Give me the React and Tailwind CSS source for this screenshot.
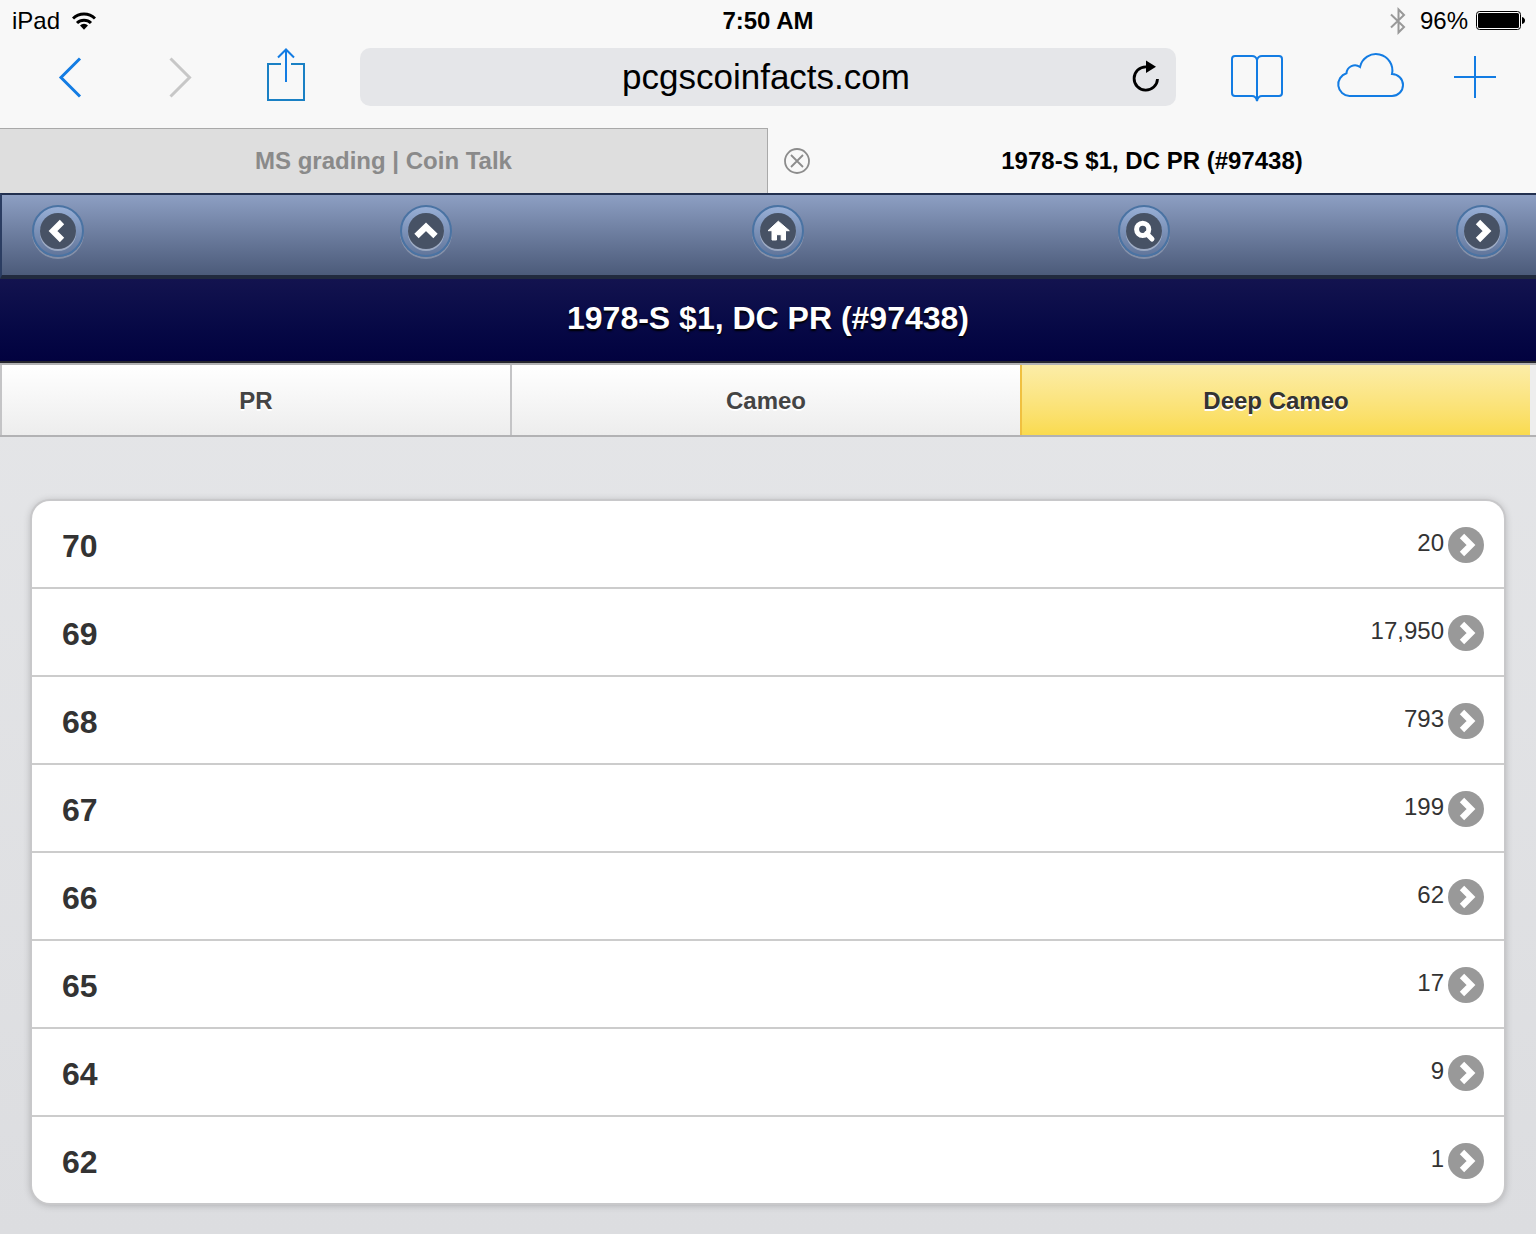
import clsx from "clsx";

const grades = [
  { grade: "70", count: "20" },
  { grade: "69", count: "17,950" },
  { grade: "68", count: "793" },
  { grade: "67", count: "199" },
  { grade: "66", count: "62" },
  { grade: "65", count: "17" },
  { grade: "64", count: "9" },
  { grade: "62", count: "1" },
];

const chevron = "M14 9 L23 18 L14 27";

const StatusBar = () => (
  <div className="grid h-10 grid-cols-3 items-center px-3 pt-[2px] text-2xl text-black">
    <div className="flex items-center gap-3">
      <span>iPad</span>
      <svg width="24" height="18" viewBox="0 0 24 18" fill="none" stroke="#000" strokeWidth="3">
        <path d="M1 6.5 A15.5 15.5 0 0 1 23 6.5" />
        <path d="M5 11 A10 10 0 0 1 19 11" />
        <path d="M8 13.5 A5.7 5.7 0 0 1 16 13.5 L12 17.8 Z" fill="#000" stroke="none" />
      </svg>
    </div>
    <div className="text-center font-bold">7:50 AM</div>
    <div className="flex items-center justify-end">
      <svg className="mr-[14px]" width="16" height="28" viewBox="0 0 16 28" fill="none" stroke="#999" strokeWidth="2">
        <path d="M1 7.5 L14 20 L8.5 25.5 V2.5 L14 8 L1 20.5" />
      </svg>
      <span className="mr-2">96%</span>
      <svg className="-mr-px" width="49" height="20" viewBox="0 0 49 20">
        <rect x="0.5" y="0.5" width="44" height="18" rx="3" fill="#fff" stroke="#000" />
        <rect x="2" y="2" width="41" height="15" rx="1.5" fill="#000" />
        <path d="M46 6 Q49 7 49 9.5 T46 13 Z" fill="#000" />
      </svg>
    </div>
  </div>
);

const Toolbar = () => (
  <div className="flex h-20 items-start pt-2">
    <div className="flex h-[58px] w-[360px] items-center justify-between pr-[54px] pl-[58px]">
      <button type="button" aria-label="Back">
        <svg width="24" height="58" viewBox="0 0 24 58" fill="none" stroke="#137ce3" strokeWidth="3">
          <path d="M22 10.5 L3 29.5 L22 48.5" />
        </svg>
      </button>
      <button type="button" aria-label="Forward">
        <svg width="36" height="58" viewBox="0 0 36 58" fill="none" stroke="#c7c7c7" strokeWidth="3">
          <path d="M14.5 10.5 L33.5 29.5 L14.5 48.5" />
        </svg>
      </button>
      <button type="button" aria-label="Share">
        <svg width="40" height="58" viewBox="0 0 40 58" fill="none" stroke="#1a80c4" strokeWidth="2">
          <path d="M15 16 H2 V52 H38 V16 H25" />
          <path d="M20 34 V2 M12 9.5 L20 1.5 L28 9.5" stroke="#137ce3" />
        </svg>
      </button>
    </div>
    <div className="relative h-[58px] flex-1">
      <input
        type="text"
        aria-label="Address"
        defaultValue="pcgscoinfacts.com"
        className="h-full w-full rounded-[10px] bg-[#e5e6e9] pr-1 text-center text-[35px] text-black outline-none"
      />
      <button type="button" aria-label="Reload" className="absolute inset-y-0 right-4">
        <svg width="28" height="58" viewBox="0 0 28 58" fill="none" stroke="#000" strokeWidth="2.8">
          <path d="M25.5 31 A11.7 11.7 0 1 1 14 18.8" />
          <path d="M14 12.5 L24 18.7 L14 25 Z" fill="#000" stroke="none" />
        </svg>
      </button>
    </div>
    <div className="flex h-[58px] w-[360px] items-center justify-between pr-[39px] pl-[54px] text-[#137ce3]">
      <button type="button" aria-label="Bookmarks">
        <svg width="54" height="58" viewBox="0 0 54 58" fill="none" stroke="currentColor" strokeWidth="2">
          <path d="M27 53 V12 Q26 8 22 8 H5 Q2 8 2 11 V45 Q2 48 5 48 H22 Q26 48 27 53 Q28 48 32 48 H49 Q52 48 52 45 V11 Q52 8 49 8 H32 Q28 8 27 12" />
        </svg>
      </button>
      <button type="button" aria-label="iCloud tabs">
        <svg width="73" height="58" viewBox="0 0 73 58" fill="none" stroke="currentColor" strokeWidth="2">
          <path d="M17.5 48 A11.6 11.6 0 0 1 14.5 25.3 A8.5 8.5 0 0 1 28 19 A16.3 16.3 0 0 1 60 26 A11 11 0 0 1 60 48 Z" />
        </svg>
      </button>
      <button type="button" aria-label="New tab">
        <svg width="44" height="58" viewBox="0 0 44 58" fill="none" stroke="currentColor" strokeWidth="2">
          <path d="M22 8 V50 M1 29 H43" />
        </svg>
      </button>
    </div>
  </div>
);

const BrowserTabs = () => (
  <div className="mt-2 grid h-[65px] grid-cols-2 text-2xl font-bold">
    <button type="button" className="border-t border-r border-[#a9a9a9] bg-[#dedede] text-[#8a8a8a]">
      MS grading | Coin Talk
    </button>
    <div className="relative flex items-center justify-center text-black">
      <button type="button" aria-label="Close tab" className="absolute left-4">
        <svg width="26" height="26" viewBox="0 0 26 26" fill="none" stroke="#8c8c8c" strokeWidth="1.8">
          <circle cx="13" cy="13" r="12" />
          <path d="M7 7 L19 19 M19 7 L7 19" />
        </svg>
      </button>
      <span>1978-S $1, DC PR (#97438)</span>
    </div>
  </div>
);

const NavButton = ({ label, children }) => (
  <a
    href="#"
    aria-label={label}
    className="flex size-[52px] items-center justify-center rounded-full border-2 border-[#4a73a3] bg-linear-to-b from-[#98afd6] to-[#62769b] shadow-[0_2px_0_rgba(255,255,255,0.25)]"
  >
    <svg
      className="size-9 rounded-full bg-[#475265] shadow-[0_2px_0_rgba(255,255,255,0.35)]"
      viewBox="0 0 36 36"
      fill="none"
      stroke="#fff"
      strokeWidth="6.2"
    >
      {children}
    </svg>
  </a>
);

const IconBar = () => (
  <nav className="grid h-[86px] grid-cols-[368fr_352fr_366fr_338fr_52px] items-start border-t-2 border-b-4 border-l-2 border-t-[#22304f] border-b-[#212a3e] border-l-[#2b3d62] bg-linear-to-b from-[#8d9fc3] to-[#4c5b7a] pt-[10px] pr-7 pl-[30px]">
    <NavButton label="Previous">
      <path d="M22 9 L13 18 L22 27" />
    </NavButton>
    <NavButton label="Up">
      <path d="M8.5 23 L18 13.8 L27.5 23" />
    </NavButton>
    <NavButton label="Home">
      <path
        d="M18.3 8.2 L29.3 17.7 H25.5 V27 H21.2 V21.7 H16.5 V27 H12 V17.7 H8 Z"
        fill="#fff"
        strokeWidth="1"
        strokeLinejoin="round"
      />
    </NavButton>
    <NavButton label="Search">
      <circle cx="16.7" cy="16.3" r="6.1" strokeWidth="5" />
      <path d="M20.5 20.5 L26 26" strokeWidth="5" strokeLinecap="round" />
    </NavButton>
    <NavButton label="Next">
      <path d={chevron} />
    </NavButton>
  </nav>
);

const DesignationTabs = () => {
  const tabs = ["PR", "Cameo", "Deep Cameo"];
  return (
    <div className="grid h-[74px] grid-cols-3 border-y-2 border-[#b2b2b4] bg-[#eeeeee] pr-[6px] text-2xl font-bold">
      {tabs.map((tab) => (
        <button
          key={tab}
          type="button"
          className={clsx(
            "border-l-2 bg-linear-to-b pt-[2px] text-shadow-[0_2px_0_#fff]",
            tab === "Deep Cameo"
              ? "border-[#f0c040] from-[#fceda7] to-[#fadb4e] text-[#333]"
              : "border-[#c4c4c6] from-white to-[#ededed] text-[#444]",
          )}
        >
          {tab}
        </button>
      ))}
    </div>
  );
};

const GradeRow = ({ grade, count }) => (
  <li className="border-b-2 border-[#cccccc] last:border-b-0">
    <a href="#" className="flex h-[86px] items-center pt-[2px] pr-5 pl-[30px] text-[#333]">
      <span className="flex-1 pt-[2px] text-[32px] leading-10 font-bold">{grade}</span>
      <span className="mr-1 pb-1 text-2xl">{count}</span>
      <svg
        className="size-9 rounded-full bg-[#999]"
        viewBox="0 0 36 36"
        fill="none"
        stroke="#fff"
        strokeWidth="6.2"
      >
        <path d={chevron} />
      </svg>
    </a>
  </li>
);

export default function App() {
  return (
    <div className="min-h-screen bg-linear-to-b from-[#e8e9eb] to-[#dcdde0] font-['Liberation_Sans',Arial,sans-serif]">
      <header className="bg-[#f8f8f8]">
        <StatusBar />
        <Toolbar />
        <BrowserTabs />
      </header>
      <IconBar />
      <h1 className="flex h-[84px] items-center justify-center border-b-2 border-[#26262e] bg-linear-to-b from-[#13134f] to-[#02023f] pb-1 text-[32px] font-bold text-white text-shadow-[0_2px_2px_#000]">
        1978-S $1, DC PR (#97438)
      </h1>
      <DesignationTabs />
      <main className="px-8 pt-16 pb-8">
        <ul className="overflow-hidden rounded-[18px] bg-white shadow-[0_0_0_2px_#c8c8ca,0_1px_8px_rgba(0,0,0,0.3)]">
          {grades.map((row) => (
            <GradeRow key={row.grade} grade={row.grade} count={row.count} />
          ))}
        </ul>
      </main>
    </div>
  );
}
